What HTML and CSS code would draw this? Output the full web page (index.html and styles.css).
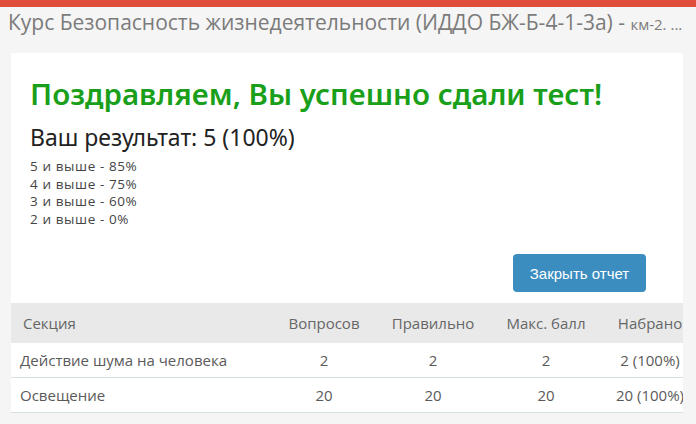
FILE: index.html
```html
<!DOCTYPE html>
<html lang="ru">
<head>
<meta charset="utf-8">
<link rel="stylesheet" href="styles.css">
</head>
<body>
<div class="topbar"></div>
<h1 class="page-title">Курс Безопасность жизнедеятельности (ИДДО БЖ-Б-4-1-3а) - <small>км-2. ...</small></h1>
<div class="card">
  <div class="card-body">
    <h2 class="success">Поздравляем, Вы успешно сдали тест!</h2>
    <div class="result">Ваш результат: 5 (100%)</div>
    <div class="scale">
      <div>5 и выше - 85%</div>
      <div>4 и выше - 75%</div>
      <div>3 и выше - 60%</div>
      <div>2 и выше - 0%</div>
    </div>
    <div class="actions"><button class="btn">Закрыть отчет</button></div>
  </div>
  <table class="report">
    <colgroup>
      <col class="c1"><col class="c2"><col class="c3"><col class="c4"><col class="c5">
    </colgroup>
    <thead>
      <tr><th class="left">Секция</th><th>Вопросов</th><th>Правильно</th><th>Макс. балл</th><th>Набрано</th></tr>
    </thead>
    <tbody>
      <tr><td class="left">Действие шума на человека</td><td>2</td><td>2</td><td>2</td><td>2 (100%)</td></tr>
      <tr><td class="left">Освещение</td><td>20</td><td>20</td><td>20</td><td>20 (100%)</td></tr>
    </tbody>
  </table>
</div>
</body>
</html>
```
FILE: styles.css
```css
html, body { margin: 0; padding: 0; }
body {
  background: #f5f5f5;
  font-family: "Open Sans", "Liberation Sans", sans-serif;
  width: 696px;
  height: 424px;
  overflow: hidden;
}
.topbar { height: 7px; background: #e04d3b; }
.page-title {
  margin: 0;
  padding: 1px 0 0 8px;
  height: 45px;
  font-weight: 400;
  font-size: 21px;
  line-height: 28px;
  color: #7b7b7b;
  white-space: nowrap;
}
.page-title small { font-size: 15px; }
.card {
  margin-left: 11px;
  width: 672px;
  background: #fff;
  overflow: hidden;
}
.card-body { padding: 21px 37px 11px 19px; }
.success {
  margin: 0;
  font-family: "Noto Sans", sans-serif;
  font-weight: 600;
  font-size: 29.5px;
  line-height: 40px;
  color: #1a9f1a;
}
.result {
  margin-top: 9px;
  font-family: "Noto Sans", sans-serif;
  font-size: 23px;
  line-height: 28px;
  color: #222;
}
.scale {
  margin-top: 7px;
  font-size: 13.5px;
  letter-spacing: 0.6px;
  color: #444;
}
.scale div { height: 17.5px; line-height: 17.5px; }
.actions { display: flex; justify-content: flex-end; margin-top: 26px; }
.btn {
  width: 133px;
  height: 38px;
  border: 0;
  border-radius: 4px;
  background: #3b8dbf;
  color: #fff;
  font-family: "Liberation Sans", Arial, sans-serif;
  font-size: 15px;
  padding: 0;
}
.report {
  border-collapse: collapse;
  table-layout: fixed;
  width: 686px;
  font-size: 15px;
  color: #666;
}
.c1 { width: 260px; }
.c2 { width: 106px; }
.c3 { width: 112px; }
.c4 { width: 114px; }
.c5 { width: 94px; }
.report th {
  background: #e9e9e9;
  font-weight: 400;
  height: 40px;
  padding: 0;
  text-align: center;
  white-space: nowrap;
}
.report th.left { text-align: left; padding-left: 12px; }
.report td {
  height: 34px;
  padding: 0;
  text-align: center;
  border-bottom: 1px solid #d5e1e1;
  white-space: nowrap;
  color: #5a5a5a;
}
.report td.left { text-align: left; padding-left: 9px; }
```
